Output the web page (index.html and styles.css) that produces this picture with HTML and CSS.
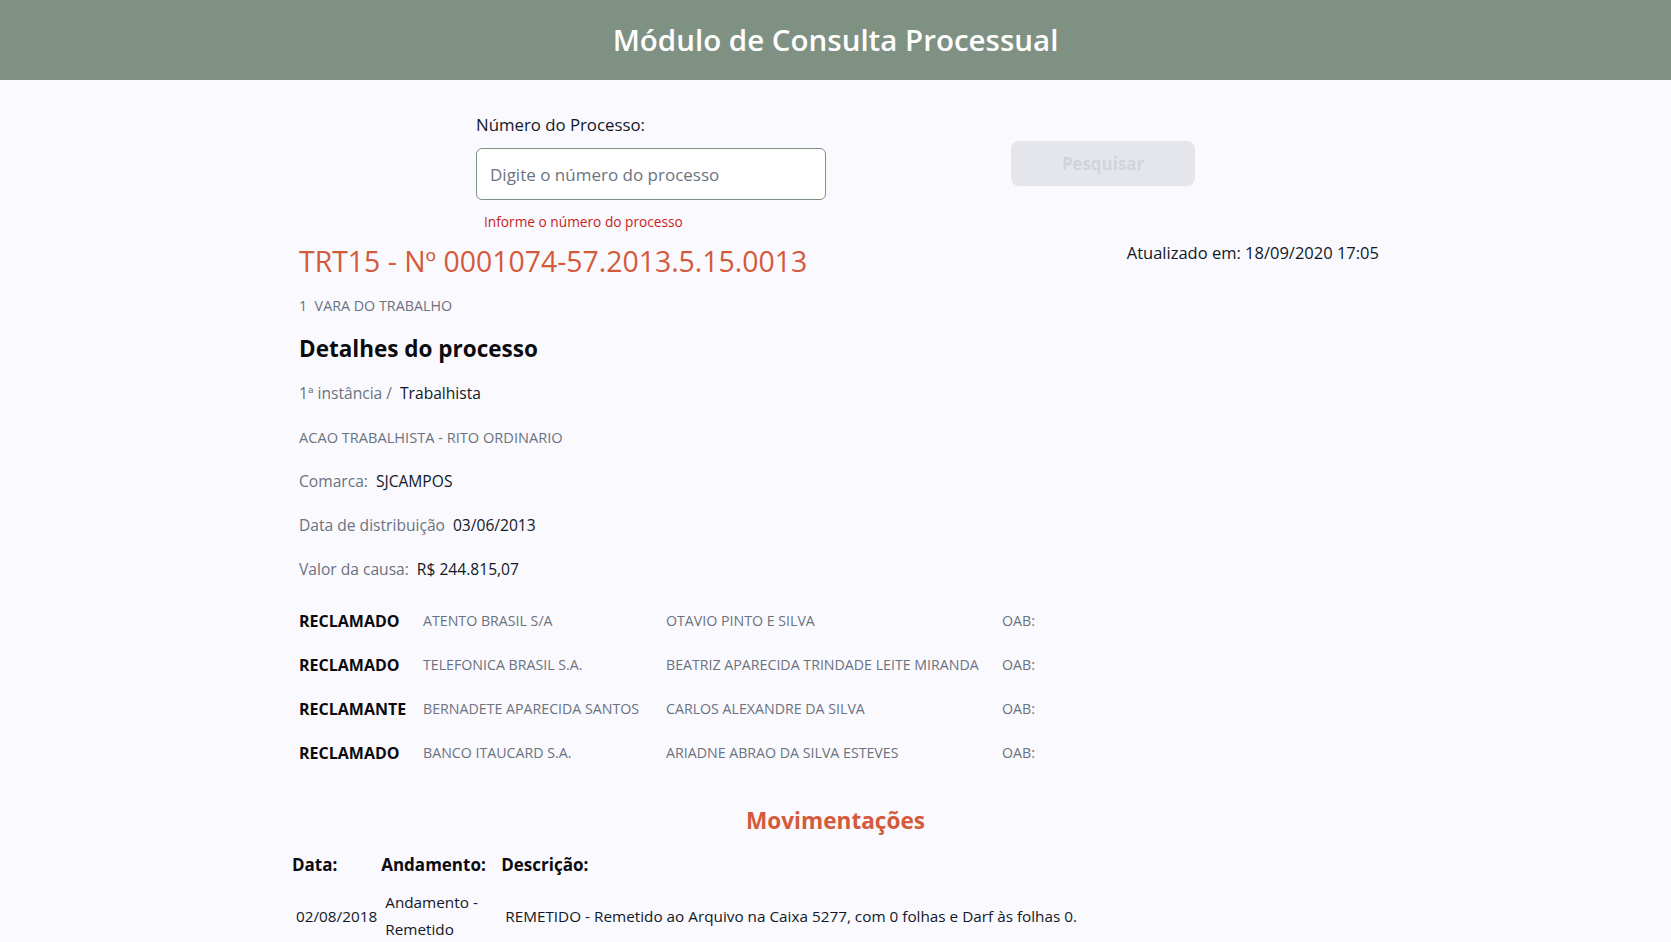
FILE: index.html
```html
<!DOCTYPE html>
<html lang="pt-BR">
<head>
<meta charset="utf-8">
<title>Módulo de Consulta Processual</title>
<link rel="stylesheet" href="styles.css">
</head>
<body>
<header class="topbar">
  <h1 class="topbar-title">Módulo de Consulta Processual</h1>
</header>
<main class="container">
  <section class="search">
    <div class="search-field">
      <label class="search-label" for="proc">Número do Processo:</label>
      <input id="proc" class="search-input" type="text" placeholder="Digite o número do processo">
      <p class="search-error">Informe o número do processo</p>
    </div>
    <button class="search-button" type="button" disabled>Pesquisar</button>
  </section>

  <section class="process">
    <div class="process-head">
      <h2 class="process-title">TRT15 - Nº 0001074-57.2013.5.15.0013</h2>
      <p class="process-updated">Atualizado em: 18/09/2020 17:05</p>
    </div>
    <p class="process-court">1&nbsp; VARA DO TRABALHO</p>
    <h3 class="section-title">Detalhes do processo</h3>
    <ul class="details">
      <li class="detail"><span class="detail-label">1ª instância /</span><span class="detail-value">Trabalhista</span></li>
      <li class="detail detail-upper"><span class="detail-label">ACAO TRABALHISTA - RITO ORDINARIO</span></li>
      <li class="detail"><span class="detail-label">Comarca:</span><span class="detail-value">SJCAMPOS</span></li>
      <li class="detail"><span class="detail-label">Data de distribuição</span><span class="detail-value">03/06/2013</span></li>
      <li class="detail"><span class="detail-label">Valor da causa:</span><span class="detail-value">R$ 244.815,07</span></li>
    </ul>
    <div class="parties">
      <div class="party">
        <span class="party-role">RECLAMADO</span>
        <span class="party-name">ATENTO BRASIL S/A</span>
        <span class="party-name">OTAVIO PINTO E SILVA</span>
        <span class="party-name">OAB:</span>
      </div>
      <div class="party">
        <span class="party-role">RECLAMADO</span>
        <span class="party-name">TELEFONICA BRASIL S.A.</span>
        <span class="party-name">BEATRIZ APARECIDA TRINDADE LEITE MIRANDA</span>
        <span class="party-name">OAB:</span>
      </div>
      <div class="party">
        <span class="party-role">RECLAMANTE</span>
        <span class="party-name">BERNADETE APARECIDA SANTOS</span>
        <span class="party-name">CARLOS ALEXANDRE DA SILVA</span>
        <span class="party-name">OAB:</span>
      </div>
      <div class="party">
        <span class="party-role">RECLAMADO</span>
        <span class="party-name">BANCO ITAUCARD S.A.</span>
        <span class="party-name">ARIADNE ABRAO DA SILVA ESTEVES</span>
        <span class="party-name">OAB:</span>
      </div>
    </div>
  </section>

  <section class="moves">
    <h3 class="moves-title">Movimentações</h3>
    <table class="moves-table">
      <thead>
        <tr>
          <th class="col-date">Data:</th>
          <th class="col-step">Andamento:</th>
          <th>Descrição:</th>
        </tr>
      </thead>
      <tbody>
        <tr>
          <td>02/08/2018</td>
          <td>Andamento - Remetido</td>
          <td>REMETIDO - Remetido ao Arquivo na Caixa 5277, com 0 folhas e Darf às folhas 0.</td>
        </tr>
      </tbody>
    </table>
  </section>
</main>
</body>
</html>
```

FILE: styles.css
```css
* { box-sizing: border-box; }

html, body {
  margin: 0;
  padding: 0;
}

body {
  background: #f9f9fe;
  font-family: "Open Sans", "Noto Sans", sans-serif;
  color: #1f2937;
}

.topbar {
  height: 80px;
  background: #7f9183;
  display: flex;
  align-items: center;
  justify-content: center;
}

.topbar-title {
  margin: 0;
  color: #ffffff;
  font-size: 29.5px;
  font-weight: 600;
  line-height: 36px;
}

.container {
  width: 1087px;
  margin: 0 auto;
}

.search {
  margin: 33px 184px 0;
  display: flex;
  justify-content: space-between;
  align-items: flex-start;
}

.search-field {
  width: 350px;
  display: flex;
  flex-direction: column;
}

.search-label {
  font-size: 16.8px;
  line-height: 24px;
  color: #111827;
}

.search-input {
  margin-top: 11px;
  height: 52px;
  width: 350px;
  border: 1px solid #7f9183;
  border-radius: 6px;
  background: #ffffff;
  padding: 0 13px;
  font-family: inherit;
  font-size: 17px;
  color: #111827;
}

.search-input::placeholder {
  color: #6b7280;
}

.search-error {
  margin: 12px 0 0 8px;
  font-size: 13.7px;
  line-height: 20px;
  color: #c81e1e;
}

.search-button {
  margin-top: 28px;
  width: 184px;
  height: 45px;
  border: none;
  border-radius: 8px;
  background: #e5e6ec;
  color: #d2d4da;
  font-family: inherit;
  font-size: 16.9px;
  font-weight: 700;
}

.process {
  padding-left: 7px;
}

.process-head {
  margin-top: 9px;
  display: flex;
  justify-content: space-between;
  align-items: flex-start;
}

.process-title {
  margin: 0;
  font-size: 28.4px;
  font-weight: 500;
  line-height: 40px;
  color: #d35a3a;
}

.process-updated {
  margin: 0;
  font-size: 16.5px;
  line-height: 24px;
  color: #111827;
}

.process-court {
  margin: 13px 0 0;
  font-size: 14.3px;
  line-height: 24px;
  color: #6b7280;
}

.section-title {
  margin: 15px 0 0;
  font-size: 22.5px;
  font-weight: 700;
  line-height: 32px;
  color: #0b0b0f;
}

.details {
  list-style: none;
  margin: 16px 0 0;
  padding: 0;
  display: flex;
  flex-direction: column;
  gap: 20px;
}

.detail {
  display: flex;
  gap: 8px;
  font-size: 15.6px;
  line-height: 24px;
}

.detail-upper {
  font-size: 14.6px;
}

.detail-label {
  color: #6b7280;
}

.detail-value {
  color: #111827;
}

.parties {
  margin-top: 28px;
  display: flex;
  flex-direction: column;
  gap: 20px;
}

.party {
  display: grid;
  grid-template-columns: 124px 243px 336px auto;
  line-height: 24px;
}

.party-role {
  font-size: 16px;
  font-weight: 700;
  color: #0b0b0f;
}

.party-name {
  font-size: 14.2px;
  color: #6b7280;
}

.moves {
  margin-top: 40px;
}

.moves-title {
  margin: 0;
  text-align: center;
  font-size: 22.6px;
  font-weight: 700;
  line-height: 32px;
  color: #d35a3a;
}

.moves-table {
  margin-top: 16px;
  border-collapse: collapse;
}

.moves-table th {
  text-align: left;
  padding: 0;
  font-size: 17px;
  font-weight: 700;
  line-height: 24px;
  color: #0b0b0f;
}

.moves-table .col-date { width: 88px; }
.moves-table .col-step { width: 120px; }

.moves-table td {
  padding: 12px 4px 0;
  font-size: 15.3px;
  line-height: 27px;
  color: #111827;
}
```
